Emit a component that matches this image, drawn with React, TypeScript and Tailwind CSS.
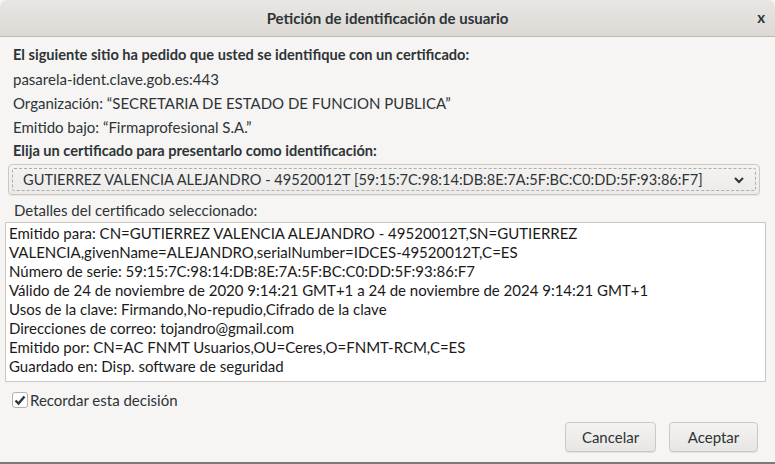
import React, { useState } from "react";

const font = "font-['Lato','Noto_Sans',sans-serif]";

const details = [
  "Emitido para: CN=GUTIERREZ VALENCIA ALEJANDRO - 49520012T,SN=GUTIERREZ",
  "VALENCIA,givenName=ALEJANDRO,serialNumber=IDCES-49520012T,C=ES",
  "Número de serie: 59:15:7C:98:14:DB:8E:7A:5F:BC:C0:DD:5F:93:86:F7",
  "Válido de 24 de noviembre de 2020 9:14:21 GMT+1 a 24 de noviembre de 2024 9:14:21 GMT+1",
  "Usos de la clave: Firmando,No-repudio,Cifrado de la clave",
  "Direcciones de correo: tojandro@gmail.com",
  "Emitido por: CN=AC FNMT Usuarios,OU=Ceres,O=FNMT-RCM,C=ES",
  "Guardado en: Disp. software de seguridad",
];

export default function App() {
  const [remember, setRemember] = useState(true);

  return (
    <div className={`w-[775px] h-[464px] bg-[#f6f5f4] text-[#2e3436] flex flex-col overflow-hidden border-b-2 border-[#7a7a7a] text-[15px] ${font}`}>
      {/* title bar */}
      <div className="h-[37px] shrink-0 rounded-t-[7px] bg-gradient-to-b from-[#e8e6e3] to-[#dcd9d5] border-b border-[#c0b8ae] flex items-center relative">
        <div className="flex-1 text-center font-bold">Petición de identificación de usuario</div>
        <button className="absolute right-[10px] top-[6px] font-bold">x</button>
      </div>

      <div className="flex flex-col px-[13px]">
        <div className="mt-[7px] h-[24px] font-bold text-[14.6px]">
          El siguiente sitio ha pedido que usted se identifique con un certificado:
        </div>
        <div className="h-[24px]">pasarela-ident.clave.gob.es:443</div>
        <div className="h-[24px]">Organización: “SECRETARIA DE ESTADO DE FUNCION PUBLICA”</div>
        <div className="h-[24px]">Emitido bajo: “Firmaprofesional S.A.”</div>
        <div className="h-[24px] font-bold text-[14.6px]">Elija un certificado para presentarlo como identificación:</div>
      </div>

      {/* combo */}
      <div className="mx-[8px] w-[752px] h-[31px] rounded-[4px] border border-[#cdc7c2] bg-gradient-to-b from-[#f4f3f2] to-[#edebe9] shadow-[0_1px_0_rgba(0,0,0,0.06)] p-[3px]">
        <div className="h-full border border-dashed border-[#b0aeab] rounded-[2px] flex items-center pl-[10px] pr-[8px]">
          <span className="flex-1 text-[14.6px] whitespace-nowrap">
            GUTIERREZ VALENCIA ALEJANDRO - 49520012T [59:15:7C:98:14:DB:8E:7A:5F:BC:C0:DD:5F:93:86:F7]
          </span>
          <svg width="12" height="8" viewBox="0 0 12 8" className="mr-[2px]">
            <path d="M2 2 L6 6 L10 2" fill="none" stroke="#2e3436" strokeWidth="2" />
          </svg>
        </div>
      </div>

      <div className="px-[14px] mt-[3px] h-[24px] leading-[24px]">Detalles del certificado seleccionado:</div>

      <div className="mx-[5px] w-[761px] h-[160px] bg-white border border-[#cdc7c2] pl-[3px] pt-[1px] leading-[19px] text-[#1a1a1a]">
        {details.map((line) => (
          <div key={line} className="whitespace-nowrap">{line}</div>
        ))}
      </div>

      <label className="flex items-center gap-[2px] ml-[12px] mt-[8px] h-[20px]">
        <span
          onClick={() => setRemember(!remember)}
          className="w-[16px] h-[16px] rounded-[3px] border border-[#b6b0aa] bg-white flex items-center justify-center"
        >
          {remember && (
            <svg width="12" height="11" viewBox="0 0 12 11">
              <path d="M1.5 5.5 L4.5 8.5 L10.5 1.5" fill="none" stroke="#2e3436" strokeWidth="2.4" />
            </svg>
          )}
        </span>
        Recordar esta decisión
      </label>

      <div className="flex justify-end gap-[13px] pr-[17px] mt-[12px]">
        <button className="w-[91px] h-[30px] rounded-[4px] border border-[#cdc7c2] bg-gradient-to-b from-[#f4f3f2] to-[#e8e6e3] shadow-[0_1px_0_rgba(0,0,0,0.08)]">
          Cancelar
        </button>
        <button className="w-[89px] h-[30px] rounded-[4px] border border-[#cdc7c2] bg-gradient-to-b from-[#f4f3f2] to-[#e8e6e3] shadow-[0_1px_0_rgba(0,0,0,0.08)]">
          Aceptar
        </button>
      </div>
    </div>
  );
}
